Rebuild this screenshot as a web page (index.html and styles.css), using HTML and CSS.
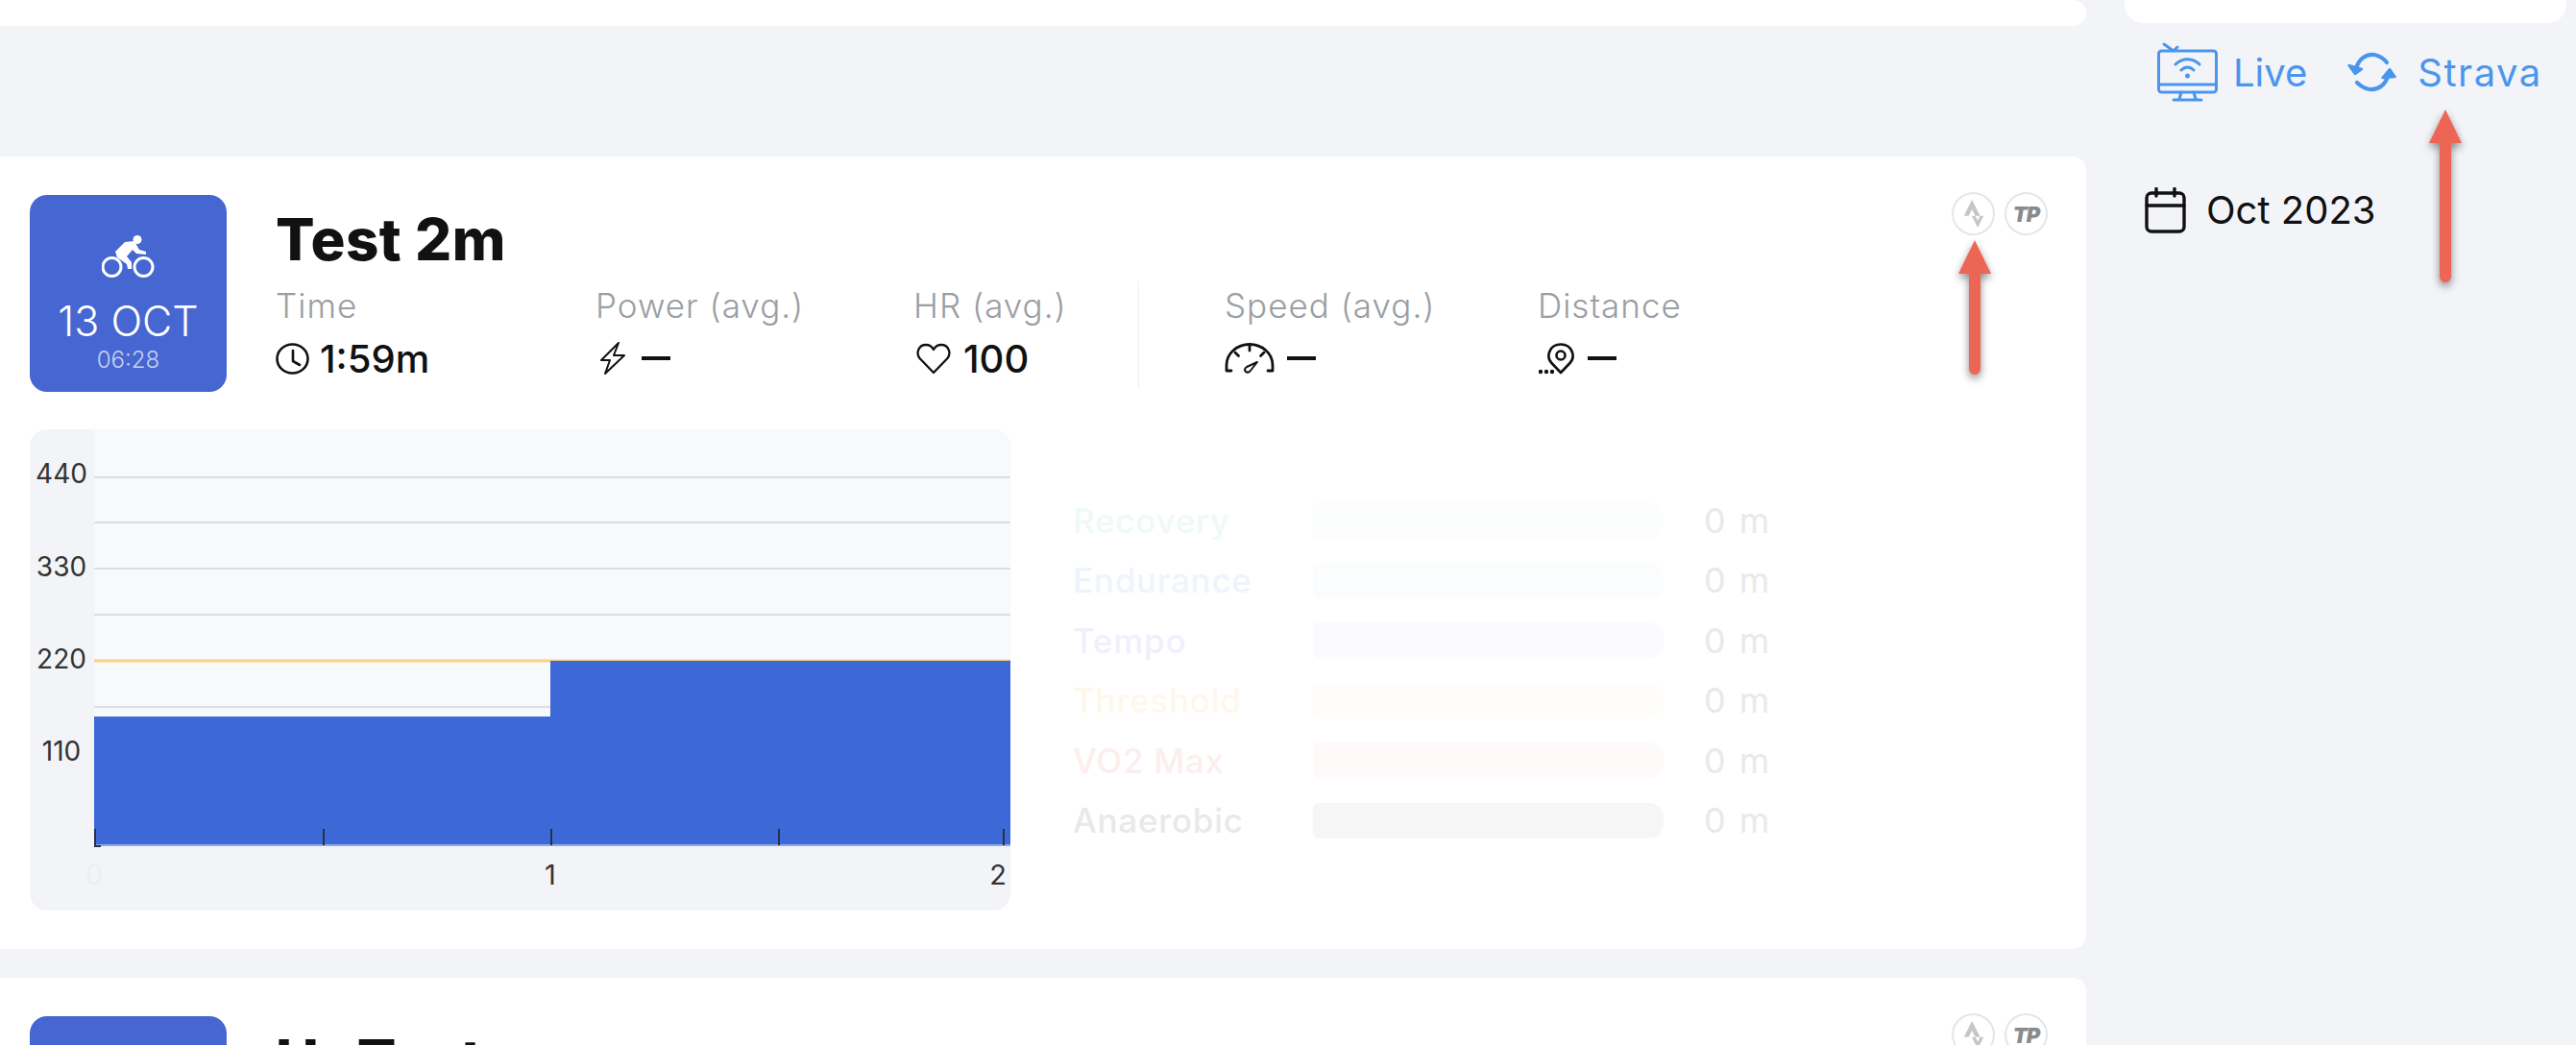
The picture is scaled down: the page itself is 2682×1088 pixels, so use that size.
FILE: index.html
```html
<!DOCTYPE html>
<html lang="en">
<head>
<meta charset="UTF-8" />
<title>Activities</title>
<link rel="stylesheet" href="styles.css">
</head>
<body>
  <div class="page">
    <main class="feed">
      <div class="card card-stub"></div>

      <section class="card activity">
        <div class="activity-top">
          <div class="date-box">
            <svg class="bike" viewBox="0 0 55 45" fill="none" stroke="#fff" stroke-width="3">
              <circle cx="10.500" cy="33" r="9.500"/>
              <circle cx="43.500" cy="33" r="9.500"/>
              <circle cx="37" cy="4.500" r="4.500" fill="#fff" stroke="none"/>
              <path d="M14 17 L24 7 L34 6 L39 15 L46 17 V20 L36 19 L32 15 L26 22 L31 28 V35 H27 L26 30 L16 23 Z" fill="#fff" stroke="none"/>
            </svg>
            <div class="date-day">13 OCT</div>
            <div class="date-time">06:28</div>
          </div>

          <div class="activity-info">
            <h2 class="activity-title">Test 2m</h2>
            <div class="stats">
              <div class="stat stat-time">
                <div class="stat-label">Time</div>
                <div class="stat-value">
                  <svg class="stat-icon icon-clock" viewBox="0 0 35 33" fill="none" stroke="#111" stroke-width="2.600" stroke-linecap="round" stroke-linejoin="round"><ellipse cx="17.500" cy="16.500" rx="16" ry="15"/><path d="M18 8 V19 L25 23"/></svg>
                  <span>1:59m</span>
                </div>
              </div>
              <div class="stat stat-power">
                <div class="stat-label">Power (avg.)</div>
                <div class="stat-value">
                  <svg class="stat-icon icon-bolt" viewBox="0 0 26 34" fill="none" stroke="#111" stroke-width="2" stroke-linejoin="round"><path d="M19 1 L1 19 H10 L5 33 L25 14 H14 Z"/></svg>
                  <span class="dash"></span>
                </div>
              </div>
              <div class="stat stat-hr">
                <div class="stat-label">HR (avg.)</div>
                <div class="stat-value">
                  <svg class="stat-icon icon-heart" viewBox="0 0 36 33" fill="none" stroke="#111" stroke-width="2.300" stroke-linejoin="round"><path d="M18 31 L3.500 16 C-1 10 3 2 10 2 C13.500 2 16.500 4 18 7 C19.500 4 22.500 2 26 2 C33 2 37 10 32.500 16 Z"/></svg>
                  <span>100</span>
                </div>
              </div>
              <div class="stat-divider"></div>
              <div class="stat stat-speed">
                <div class="stat-label">Speed (avg.)</div>
                <div class="stat-value">
                  <svg class="stat-icon icon-gauge" viewBox="0 0 52 32" fill="none" stroke="#111" stroke-width="2.800" stroke-linecap="round" stroke-linejoin="round">
                    <path d="M7 29 H2 V23 C2 11 13 1.500 26 1.500 C39 1.500 50 11 50 23 V29 H45"/>
                    <path d="M26 2 V8 M11 10 L14.500 13.500 M41 10 L37.500 13.500"/>
                    <path d="M34 20 L23 25 C19 28 22 32 26 30 Z" stroke-width="2"/>
                  </svg>
                  <span class="dash"></span>
                </div>
              </div>
              <div class="stat stat-distance">
                <div class="stat-label">Distance</div>
                <div class="stat-value">
                  <svg class="stat-icon icon-route" viewBox="0 0 39 33" fill="none" stroke="#111" stroke-width="2.600">
                    <path d="M24 31 L14.500 21 C8 14 12.500 1.500 24 1.500 C35.500 1.500 40 14 33.500 21 Z" stroke-linejoin="round"/>
                    <circle cx="24" cy="13" r="4.500"/>
                    <circle cx="3" cy="30" r="2.200" fill="#111" stroke="none"/>
                    <circle cx="9" cy="30" r="2.200" fill="#111" stroke="none"/>
                    <circle cx="15" cy="30" r="2.200" fill="#111" stroke="none"/>
                  </svg>
                  <span class="dash"></span>
                </div>
              </div>
            </div>
          </div>

          <div class="sync-badges">
            <span class="badge">
              <svg class="badge-strava" viewBox="3 0 18 24"><path d="M15.387 17.944l-2.089-4.116h-3.065L15.387 24l5.150-10.172h-3.066m-7.008-5.599l2.836 5.598h4.172L10.463 0l-7 13.828h4.169"/></svg>
            </span>
            <span class="badge"><span class="badge-tp">TP</span></span>
          </div>
        </div>

        <div class="activity-bottom">
          <div class="chart">
            <svg viewBox="31 447 1021 501" width="1021" height="501">
              <rect class="plot-bg" x="98" y="447" width="954" height="433"/>
              <g class="grid-lines">
                <path d="M98 497 H1052 M98 544 H1052 M98 592 H1052 M98 640 H1052 M98 736 H573"/>
              </g>
              <rect class="ftp-line" x="98" y="686.500" width="954" height="3"/>
              <path class="power-area" d="M98 746 H573 V688 H1052 V880 H98 Z"/>
              <rect class="axis-line" x="98" y="879" width="954" height="2"/>
              <g class="ticks">
                <path d="M99 863 V881 H105 M337 863 V880 M574 863 V880 M811 863 V880 M1045 863 V880"/>
              </g>
              <g class="y-labels">
                <text x="64" y="503">440</text>
                <text x="64" y="600">330</text>
                <text x="64" y="696">220</text>
                <text x="64" y="792">110</text>
              </g>
              <g class="x-labels">
                <text class="x-zero" x="98" y="921">0</text>
                <text x="573" y="921">1</text>
                <text x="1039" y="921">2</text>
              </g>
            </svg>
          </div>

          <div class="zones">
            <div class="zone zone-recovery"><span class="zone-name">Recovery</span><span class="zone-bar"></span><span class="zone-value">0 m</span></div>
            <div class="zone zone-endurance"><span class="zone-name">Endurance</span><span class="zone-bar"></span><span class="zone-value">0 m</span></div>
            <div class="zone zone-tempo"><span class="zone-name">Tempo</span><span class="zone-bar"></span><span class="zone-value">0 m</span></div>
            <div class="zone zone-threshold"><span class="zone-name">Threshold</span><span class="zone-bar"></span><span class="zone-value">0 m</span></div>
            <div class="zone zone-vo2"><span class="zone-name">VO2 Max</span><span class="zone-bar"></span><span class="zone-value">0 m</span></div>
            <div class="zone zone-anaerobic"><span class="zone-name">Anaerobic</span><span class="zone-bar"></span><span class="zone-value">0 m</span></div>
          </div>
        </div>
      </section>

      <section class="card activity">
        <div class="activity-top">
          <div class="date-box"></div>
          <div class="activity-info">
            <h2 class="activity-title">Hr Test</h2>
          </div>
          <div class="sync-badges">
            <span class="badge">
              <svg class="badge-strava" viewBox="3 0 18 24"><path d="M15.387 17.944l-2.089-4.116h-3.065L15.387 24l5.150-10.172h-3.066m-7.008-5.599l2.836 5.598h4.172L10.463 0l-7 13.828h4.169"/></svg>
            </span>
            <span class="badge"><span class="badge-tp">TP</span></span>
          </div>
        </div>
      </section>
    </main>

    <aside class="side">
      <div class="side-stub"></div>
      <div class="side-links">
        <a class="side-link link-live">
          <svg class="icon-tv" viewBox="0 0 63 62" fill="none" stroke="#4b96ed" stroke-width="3" stroke-linecap="round" stroke-linejoin="round">
            <rect x="1.500" y="9" width="60" height="43" rx="3"/>
            <path d="M7 2 L17 9 L21 5 M2 44 H61 M25 52 L23 59 M38 52 L40 59 M17 60 H46"/>
            <path d="M19 23 C26 16 37 16 44 23 M25 29 C29 25 34 25 38 29"/>
            <circle cx="31.500" cy="35" r="2.500" fill="#4b96ed" stroke="none"/>
          </svg>
          <span>Live</span>
        </a>
        <a class="side-link link-strava">
          <svg class="icon-sync" viewBox="0 0 51 42" fill="none" stroke="#4b96ed" stroke-width="4.200" stroke-linecap="round" stroke-linejoin="round">
            <path d="M9 18 C11 8 19 2 28 3 C33 4 37 6 41 11"/>
            <path d="M42 25 C40 34 32 40 23 39 C18 38 14 36 10 32"/>
            <path d="M1.500 14 L8 23 L15 18 Z" fill="#4b96ed" stroke-width="2.500"/>
            <path d="M49.500 26 L44 18 L36.500 27 Z" fill="#4b96ed" stroke-width="2.500"/>
          </svg>
          <span>Strava</span>
        </a>
      </div>
      <div class="month-pick">
        <svg class="icon-cal" viewBox="0 0 43 48" fill="none" stroke="#111" stroke-width="3.400" stroke-linecap="round">
          <rect x="2" y="6" width="39" height="40" rx="5"/>
          <path d="M12 1.500 V9 M31 1.500 V9 M2 19 H41"/>
        </svg>
        <span>Oct 2023</span>
      </div>
    </aside>
  </div>

  <!-- annotation arrows drawn over the screenshot -->
  <svg class="arrow arrow-badge" viewBox="0 0 50 150"><path d="M25 2 L42 37 H31 V136 a6 6 0 0 1 -12 0 V37 H8 Z"/></svg>
  <svg class="arrow arrow-strava" viewBox="0 0 50 190"><path d="M25 2 L42 37 H31 V176 a6 6 0 0 1 -12 0 V37 H8 Z"/></svg>
</body>
</html>
```
FILE: styles.css
```css
* {
  box-sizing: border-box;
}
html, body {
  margin: 0;
  height: 100%;
  overflow: hidden;
}
body {
  background-color: #f3f4f8;
  color: #111;
  font-family: Inter, "Noto Sans", sans-serif;
}
.page {
  display: flex;
  align-items: flex-start;
  height: 1088px;
  overflow: hidden;
}

/* activity feed */
.feed {
  width: 2172px;
  flex-shrink: 0;
  display: flex;
  flex-direction: column;
}
.card {
  background-color: #fff;
  border-radius: 0 14px 14px 0;
}
.card-stub {
  height: 27px;
  margin-bottom: 136px;
}
.activity {
  height: 825px;
  margin-bottom: 30px;
  padding: 40px 40px 0 31px;
  flex-shrink: 0;
}
.activity-top {
  display: flex;
  align-items: flex-start;
}
.date-box {
  width: 205px;
  height: 205px;
  flex-shrink: 0;
  background-color: #4667d1;
  border-radius: 18px;
  color: #fff;
  display: flex;
  flex-direction: column;
  align-items: center;
  padding-top: 42px;
}
.bike {
  width: 55px;
  height: 45px;
}
.date-day {
  font-size: 43px;
  font-weight: 300;
  line-height: 50px;
  margin-top: 19px;
}
.date-time {
  font-size: 24px;
  font-weight: 300;
  line-height: 30px;
  margin-top: 1px;
  color: #c8d1f0;
}
.activity-info {
  flex: 1;
  margin-left: 51px;
}
.activity-title {
  margin: 11px 0 0;
  font-size: 60px;
  font-weight: 800;
  line-height: 70px;
  letter-spacing: 0.5px;
}
.stats {
  display: flex;
  margin-top: 12px;
  height: 112px;
}
.stat-label {
  font-size: 35px;
  font-weight: 300;
  line-height: 44px;
  letter-spacing: 1px;
  color: #9a9ea3;
  white-space: nowrap;
}
.stat-value {
  display: flex;
  align-items: center;
  gap: 13px;
  height: 44px;
  margin-top: 11px;
  font-size: 40px;
  font-weight: 500;
}
.stat-time { width: 333px; }
.stat-power { width: 331px; }
.stat-hr { width: 234px; }
.stat-speed { width: 326px; margin-left: 89px; }
.stat-distance { width: 160px; }
.stat-divider {
  width: 1px;
  height: 112px;
  margin-top: -3px;
  background-color: #eee;
}
.stat-icon {
  width: 33px;
  height: 33px;
  flex-shrink: 0;
}
.icon-clock { width: 35px; margin-right: -2px; }
.icon-bolt { width: 26px; height: 34px; margin-left: 5px; margin-right: 4px; }
.icon-heart { width: 36px; margin-left: 3px; }
.icon-gauge { width: 52px; height: 32px; }
.icon-route { width: 39px; }
.dash {
  display: block;
  width: 30px;
  height: 4px;
  background-color: #111;
}
.sync-badges {
  display: flex;
  gap: 10px;
  margin-top: -3px;
}
.badge {
  width: 45px;
  height: 45px;
  border: 2px solid #e6e6e6;
  border-radius: 50%;
  display: flex;
  align-items: center;
  justify-content: center;
}
.badge-strava {
  width: 22px;
  height: 29px;
  fill: #c6c6c6;
}
.badge-tp {
  font-size: 22px;
  font-weight: 900;
  font-style: italic;
  color: #8a8a8a;
  letter-spacing: -1px;
}

/* chart + zones */
.activity-bottom {
  display: flex;
  margin-top: 39px;
}
.chart {
  width: 1021px;
  height: 501px;
  background-color: #f3f4f8;
  border-radius: 18px;
  overflow: hidden;
  flex-shrink: 0;
}
.chart svg {
  display: block;
}
.plot-bg { fill: #f8f9fd; }
.grid-lines path {
  stroke: #dcdde3;
  stroke-width: 2;
  fill: none;
}
.ftp-line { fill: #fbd27f; }
.power-area { fill: #3d68d8; }
.axis-line { fill: #8ea8e8; }
.ticks path {
  stroke: #2a2f45;
  stroke-width: 2;
  fill: none;
}
.y-labels text {
  font-size: 28px;
  fill: #333;
  text-anchor: middle;
}
.x-labels text {
  font-size: 29px;
  fill: #333;
  text-anchor: middle;
}
.x-labels .x-zero { fill: #eee; }
.zones {
  margin-left: 65px;
  margin-top: 76px;
  display: flex;
  flex-direction: column;
  gap: 25px;
}
.zone {
  display: flex;
  align-items: center;
  height: 37.500px;
}
.zone-name {
  width: 250px;
  font-size: 35px;
  font-weight: 500;
  letter-spacing: 0.75px;
}
.zone-bar {
  width: 365px;
  height: 37.500px;
  border-radius: 5px 15px 15px 5px;
}
.zone-value {
  margin-left: 42px;
  font-size: 36px;
  letter-spacing: 2px;
  color: #e9e9e9;
}
.zone-recovery .zone-name { color: #eefaf3; }
.zone-recovery .zone-bar { background-color: #fbfefc; }
.zone-endurance .zone-name { color: #eef4fc; }
.zone-endurance .zone-bar { background-color: #fbfcfe; }
.zone-tempo .zone-name { color: #f1effc; }
.zone-tempo .zone-bar { background-color: #fbfaff; }
.zone-threshold .zone-name { color: #fef8ec; }
.zone-threshold .zone-bar { background-color: #fefdf9; }
.zone-vo2 .zone-name { color: #fdeeee; }
.zone-vo2 .zone-bar { background-color: #fffafa; }
.zone-anaerobic .zone-name { color: #e9e9e9; }
.zone-anaerobic .zone-bar { background-color: #f6f6f6; }

/* right column */
.side {
  margin-left: 40px;
  width: 460px;
  flex-shrink: 0;
}
.side-stub {
  height: 24px;
  background-color: #fff;
  border-radius: 0 0 20px 20px;
}
.side-links {
  display: flex;
  align-items: center;
  margin-top: 20px;
  padding-left: 34px;
  height: 62px;
}
.side-link {
  display: flex;
  align-items: center;
  color: #4b96ed;
  font-size: 40px;
}
.icon-tv {
  width: 63px;
  height: 62px;
  margin-right: 16px;
}
.link-strava {
  margin-left: 42px;
  letter-spacing: 1.500px;
}
.icon-sync {
  width: 51px;
  height: 42px;
  margin-right: 22px;
}
.month-pick {
  display: flex;
  align-items: center;
  gap: 21px;
  margin-top: 88px;
  padding-left: 21px;
  font-size: 40px;
}
.icon-cal {
  width: 43px;
  height: 48px;
}

/* annotation arrows */
.arrow {
  position: absolute;
  overflow: visible;
  filter: drop-shadow(0 4px 4px rgba(0, 0, 0, 0.45));
}
.arrow path {
  fill: #ed6655;
}
.arrow-badge {
  left: 2031px;
  top: 248px;
  width: 50px;
  height: 150px;
}
.arrow-strava {
  left: 2521px;
  top: 112px;
  width: 50px;
  height: 190px;
}
```
